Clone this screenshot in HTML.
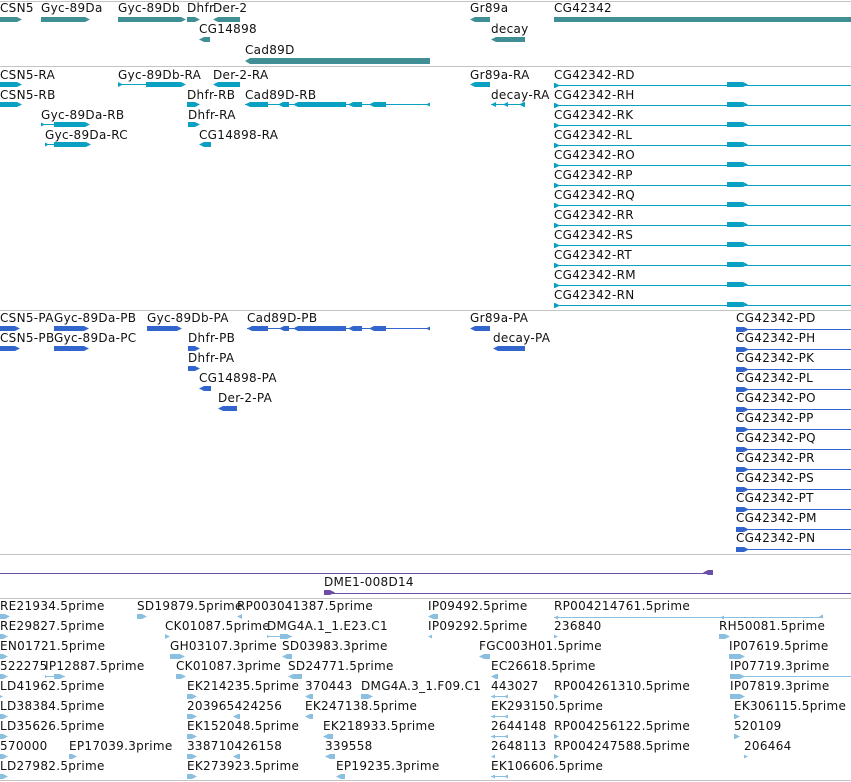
<!DOCTYPE html>
<html><head><meta charset="utf-8"><style>
body{margin:0;width:851px;height:782px;background:#fff;position:relative;overflow:hidden;font-family:"DejaVu Sans","Liberation Sans",sans-serif;font-size:12px;color:#111}
.t{position:absolute;white-space:nowrap;line-height:14px;letter-spacing:0.3px}
i{position:absolute;display:block;height:5px}
.g{background:#408f94}.r{background:#0aa0c2}.p{background:#3366cc}.e{background:#8bbfe0}.v{background:#6b4fa6}
.ar{clip-path:polygon(0 0,calc(100% - 5px) 0,100% 50%,calc(100% - 5px) 100%,0 100%)}
.al{clip-path:polygon(5px 0,100% 0,100% 100%,5px 100%,0 50%)}
b{position:absolute;display:block;height:1px}
.h{position:absolute;left:0;width:851px;height:1px;background:#c4c4c4}
</style></head><body>
<div class="h" style="top:1px"></div>
<div class="h" style="top:66px"></div>
<div class="h" style="top:310px"></div>
<div class="h" style="top:554px"></div>
<div class="h" style="top:598px"></div>
<div class="h" style="top:780px"></div>

<!-- gene track -->
<div class="t" style="left:0;top:1px">CSN5</div>
<div class="t" style="left:41px;top:1px">Gyc-89Da</div>
<div class="t" style="left:118px;top:1px">Gyc-89Db</div>
<div class="t" style="left:187px;top:1px">Dhfr</div>
<div class="t" style="left:213px;top:1px">Der-2</div>
<div class="t" style="left:470px;top:1px">Gr89a</div>
<div class="t" style="left:554px;top:1px">CG42342</div>
<i class="g ar" style="left:0;top:17px;width:22px"></i>
<i class="g ar" style="left:41px;top:17px;width:49px"></i>
<i class="g ar" style="left:118px;top:17px;width:68px"></i>
<i class="g ar" style="left:187px;top:17px;width:13px"></i>
<i class="g al" style="left:213px;top:17px;width:27px"></i>
<i class="g al" style="left:470px;top:17px;width:20px"></i>
<i class="g" style="left:554px;top:17px;width:297px"></i>
<div class="t" style="left:199px;top:22px">CG14898</div>
<div class="t" style="left:491px;top:22px">decay</div>
<i class="g al" style="left:199px;top:37px;width:11px"></i>
<i class="g al" style="left:491px;top:37px;width:34px"></i>
<div class="t" style="left:245px;top:43px">Cad89D</div>
<i class="g al" style="left:245px;top:58px;width:185px;height:6px"></i>

<!-- transcripts -->
<div class="t" style="left:0;top:68px">CSN5-RA</div>
<div class="t" style="left:118px;top:68px">Gyc-89Db-RA</div>
<div class="t" style="left:213px;top:68px">Der-2-RA</div>
<div class="t" style="left:470px;top:68px">Gr89a-RA</div>
<i class="r ar" style="left:0;top:82px;width:22px"></i>
<b class="r" style="left:118px;top:84px;width:28px"></b><i class="r ar" style="left:118px;top:82px;width:5px"></i><i class="r ar" style="left:146px;top:82px;width:40px"></i>
<i class="r al" style="left:213px;top:82px;width:27px"></i>
<i class="r al" style="left:470px;top:82px;width:20px"></i>
<div class="t" style="left:0;top:88px">CSN5-RB</div>
<div class="t" style="left:187px;top:88px">Dhfr-RB</div>
<div class="t" style="left:245px;top:88px">Cad89D-RB</div>
<div class="t" style="left:491px;top:88px">decay-RA</div>
<i class="r ar" style="left:0;top:102px;width:22px"></i>
<i class="r ar" style="left:187px;top:102px;width:13px"></i>
<b class="r" style="left:245px;top:104px;width:185px"></b>
<i class="r al" style="left:245px;top:102px;width:23px"></i><i class="r al" style="left:278px;top:102px;width:11px"></i><i class="r al" style="left:293px;top:102px;width:53px"></i><i class="r al" style="left:348px;top:102px;width:14px"></i><i class="r al" style="left:369px;top:102px;width:17px"></i><i class="r al" style="left:426px;top:102px;width:4px"></i>
<b class="r" style="left:491px;top:104px;width:34px"></b><i class="r al" style="left:491px;top:102px;width:5px"></i><i class="r al" style="left:503px;top:102px;width:5px"></i><i class="r al" style="left:519px;top:102px;width:6px"></i>
<div class="t" style="left:41px;top:108px">Gyc-89Da-RB</div>
<div class="t" style="left:188px;top:108px">Dhfr-RA</div>
<b class="r" style="left:41px;top:124px;width:14px"></b><i class="r ar" style="left:41px;top:122px;width:4px"></i><i class="r ar" style="left:54px;top:122px;width:36px"></i>
<i class="r ar" style="left:188px;top:122px;width:12px"></i>
<div class="t" style="left:45px;top:128px">Gyc-89Da-RC</div>
<div class="t" style="left:199px;top:128px">CG14898-RA</div>
<b class="r" style="left:45px;top:144px;width:10px"></b><i class="r ar" style="left:45px;top:142px;width:4px"></i><i class="r ar" style="left:54px;top:142px;width:37px"></i>
<i class="r al" style="left:199px;top:142px;width:12px"></i>

<div class="t" style="left:554px;top:68px">CG42342-RD</div>
<div class="t" style="left:554px;top:88px">CG42342-RH</div>
<div class="t" style="left:554px;top:108px">CG42342-RK</div>
<div class="t" style="left:554px;top:128px">CG42342-RL</div>
<div class="t" style="left:554px;top:148px">CG42342-RO</div>
<div class="t" style="left:554px;top:168px">CG42342-RP</div>
<div class="t" style="left:554px;top:188px">CG42342-RQ</div>
<div class="t" style="left:554px;top:208px">CG42342-RR</div>
<div class="t" style="left:554px;top:228px">CG42342-RS</div>
<div class="t" style="left:554px;top:248px">CG42342-RT</div>
<div class="t" style="left:554px;top:268px">CG42342-RM</div>
<div class="t" style="left:554px;top:288px">CG42342-RN</div>
<b class="r" style="left:554px;top:85px;width:297px"></b><i class="r ar" style="left:554px;top:83px;width:6px"></i><i class="r ar" style="left:727px;top:82px;width:21px"></i>
<b class="r" style="left:554px;top:105px;width:297px"></b><i class="r ar" style="left:554px;top:103px;width:6px"></i><i class="r ar" style="left:727px;top:102px;width:21px"></i>
<b class="r" style="left:554px;top:125px;width:297px"></b><i class="r ar" style="left:554px;top:123px;width:6px"></i><i class="r ar" style="left:727px;top:122px;width:21px"></i>
<b class="r" style="left:554px;top:145px;width:297px"></b><i class="r ar" style="left:554px;top:143px;width:6px"></i><i class="r ar" style="left:727px;top:142px;width:21px"></i>
<b class="r" style="left:554px;top:165px;width:297px"></b><i class="r ar" style="left:554px;top:163px;width:6px"></i><i class="r ar" style="left:727px;top:162px;width:21px"></i>
<b class="r" style="left:554px;top:185px;width:297px"></b><i class="r ar" style="left:554px;top:183px;width:6px"></i><i class="r ar" style="left:727px;top:182px;width:21px"></i>
<b class="r" style="left:554px;top:205px;width:297px"></b><i class="r ar" style="left:554px;top:203px;width:6px"></i><i class="r ar" style="left:727px;top:202px;width:21px"></i>
<b class="r" style="left:554px;top:225px;width:297px"></b><i class="r ar" style="left:554px;top:223px;width:6px"></i><i class="r ar" style="left:727px;top:222px;width:21px"></i>
<b class="r" style="left:554px;top:245px;width:297px"></b><i class="r ar" style="left:554px;top:243px;width:6px"></i><i class="r ar" style="left:727px;top:242px;width:21px"></i>
<b class="r" style="left:554px;top:265px;width:297px"></b><i class="r ar" style="left:554px;top:263px;width:6px"></i><i class="r ar" style="left:727px;top:262px;width:21px"></i>
<b class="r" style="left:554px;top:285px;width:297px"></b><i class="r ar" style="left:554px;top:283px;width:6px"></i><i class="r ar" style="left:727px;top:282px;width:21px"></i>
<b class="r" style="left:554px;top:305px;width:297px"></b><i class="r ar" style="left:554px;top:303px;width:6px"></i><i class="r ar" style="left:727px;top:302px;width:21px"></i>

<!-- proteins -->
<div class="t" style="left:0;top:311px">CSN5-PA</div>
<div class="t" style="left:54px;top:311px">Gyc-89Da-PB</div>
<div class="t" style="left:147px;top:311px">Gyc-89Db-PA</div>
<div class="t" style="left:247px;top:311px">Cad89D-PB</div>
<div class="t" style="left:470px;top:311px">Gr89a-PA</div>
<i class="p ar" style="left:0;top:326px;width:20px"></i>
<i class="p ar" style="left:54px;top:326px;width:35px"></i>
<i class="p ar" style="left:147px;top:326px;width:35px"></i>
<b class="p" style="left:247px;top:328px;width:183px"></b>
<i class="p al" style="left:247px;top:326px;width:21px"></i><i class="p al" style="left:279px;top:326px;width:10px"></i><i class="p al" style="left:293px;top:326px;width:53px"></i><i class="p al" style="left:348px;top:326px;width:14px"></i><i class="p al" style="left:369px;top:326px;width:17px"></i><i class="p al" style="left:426px;top:326px;width:4px"></i>
<i class="p al" style="left:470px;top:326px;width:20px"></i>
<div class="t" style="left:0;top:331px">CSN5-PB</div>
<div class="t" style="left:54px;top:331px">Gyc-89Da-PC</div>
<div class="t" style="left:188px;top:331px">Dhfr-PB</div>
<div class="t" style="left:493px;top:331px">decay-PA</div>
<i class="p ar" style="left:0;top:346px;width:20px"></i>
<i class="p ar" style="left:54px;top:346px;width:35px"></i>
<i class="p ar" style="left:188px;top:346px;width:12px"></i>
<i class="p al" style="left:493px;top:346px;width:32px"></i>
<div class="t" style="left:188px;top:351px">Dhfr-PA</div>
<i class="p ar" style="left:188px;top:366px;width:12px"></i>
<div class="t" style="left:199px;top:371px">CG14898-PA</div>
<i class="p al" style="left:199px;top:386px;width:12px"></i>
<div class="t" style="left:218px;top:391px">Der-2-PA</div>
<i class="p al" style="left:218px;top:406px;width:19px"></i>

<div class="t" style="left:736px;top:311px">CG42342-PD</div>
<div class="t" style="left:736px;top:331px">CG42342-PH</div>
<div class="t" style="left:736px;top:351px">CG42342-PK</div>
<div class="t" style="left:736px;top:371px">CG42342-PL</div>
<div class="t" style="left:736px;top:391px">CG42342-PO</div>
<div class="t" style="left:736px;top:411px">CG42342-PP</div>
<div class="t" style="left:736px;top:431px">CG42342-PQ</div>
<div class="t" style="left:736px;top:451px">CG42342-PR</div>
<div class="t" style="left:736px;top:471px">CG42342-PS</div>
<div class="t" style="left:736px;top:491px">CG42342-PT</div>
<div class="t" style="left:736px;top:511px">CG42342-PM</div>
<div class="t" style="left:736px;top:531px">CG42342-PN</div>
<b class="p" style="left:736px;top:329px;width:115px"></b><i class="p ar" style="left:736px;top:327px;width:13px"></i>
<b class="p" style="left:736px;top:349px;width:115px"></b><i class="p ar" style="left:736px;top:347px;width:13px"></i>
<b class="p" style="left:736px;top:369px;width:115px"></b><i class="p ar" style="left:736px;top:367px;width:13px"></i>
<b class="p" style="left:736px;top:389px;width:115px"></b><i class="p ar" style="left:736px;top:387px;width:13px"></i>
<b class="p" style="left:736px;top:409px;width:115px"></b><i class="p ar" style="left:736px;top:407px;width:13px"></i>
<b class="p" style="left:736px;top:429px;width:115px"></b><i class="p ar" style="left:736px;top:427px;width:13px"></i>
<b class="p" style="left:736px;top:449px;width:115px"></b><i class="p ar" style="left:736px;top:447px;width:13px"></i>
<b class="p" style="left:736px;top:469px;width:115px"></b><i class="p ar" style="left:736px;top:467px;width:13px"></i>
<b class="p" style="left:736px;top:489px;width:115px"></b><i class="p ar" style="left:736px;top:487px;width:13px"></i>
<b class="p" style="left:736px;top:509px;width:115px"></b><i class="p ar" style="left:736px;top:507px;width:13px"></i>
<b class="p" style="left:736px;top:529px;width:115px"></b><i class="p ar" style="left:736px;top:527px;width:13px"></i>
<b class="p" style="left:736px;top:549px;width:115px"></b><i class="p ar" style="left:736px;top:547px;width:13px"></i>

<!-- purple track -->
<b class="v" style="left:0;top:573px;width:710px"></b><i class="v al" style="left:703px;top:570px;width:10px"></i>
<div class="t" style="left:324px;top:575px">DME1-008D14</div>
<b class="v" style="left:324px;top:593px;width:527px"></b><i class="v ar" style="left:324px;top:590px;width:11px"></i>

<!-- ESTs -->
<div class="t" style="left:0;top:599px">RE21934.5prime</div>
<div class="t" style="left:137px;top:599px">SD19879.5prime</div>
<div class="t" style="left:237px;top:599px">RP003041387.5prime</div>
<div class="t" style="left:428px;top:599px">IP09492.5prime</div>
<div class="t" style="left:554px;top:599px">RP004214761.5prime</div>
<i class="e ar" style="left:0;top:614px;width:10px"></i><i class="e ar" style="left:137px;top:614px;width:10px"></i><i class="e al" style="left:237px;top:614px;width:5px"></i><i class="e al" style="left:428px;top:614px;width:10px"></i>
<b class="e" style="left:554px;top:617px;width:269px"></b><i class="e al" style="left:554px;top:615px;width:4px"></i><i class="e al" style="left:720px;top:615px;width:4px"></i><i class="e al" style="left:819px;top:614px;width:4px"></i>

<div class="t" style="left:0;top:619px">RE29827.5prime</div>
<div class="t" style="left:165px;top:619px">CK01087.5prime</div>
<div class="t" style="left:267px;top:619px">DMG4A.1_1.E23.C1</div>
<div class="t" style="left:428px;top:619px">IP09292.5prime</div>
<div class="t" style="left:554px;top:619px">236840</div>
<div class="t" style="left:719px;top:619px">RH50081.5prime</div>
<i class="e ar" style="left:0;top:634px;width:8px"></i><i class="e ar" style="left:165px;top:634px;width:5px"></i><b class="e" style="left:267px;top:636px;width:25px"></b><i class="e ar" style="left:267px;top:634px;width:3px"></i><i class="e ar" style="left:280px;top:634px;width:12px"></i><i class="e al" style="left:428px;top:634px;width:4px"></i><i class="e ar" style="left:554px;top:634px;width:4px"></i><i class="e ar" style="left:719px;top:634px;width:11px"></i>

<div class="t" style="left:0;top:639px">EN01721.5prime</div>
<div class="t" style="left:170px;top:639px">GH03107.3prime</div>
<div class="t" style="left:282px;top:639px">SD03983.3prime</div>
<div class="t" style="left:479px;top:639px">FGC003H01.5prime</div>
<div class="t" style="left:729px;top:639px">IP07619.5prime</div>
<i class="e ar" style="left:0;top:654px;width:8px"></i><i class="e ar" style="left:170px;top:654px;width:15px"></i><i class="e al" style="left:282px;top:654px;width:10px"></i><i class="e al" style="left:479px;top:654px;width:11px"></i><i class="e ar" style="left:729px;top:654px;width:16px"></i>

<div class="t" style="left:0;top:659px">522275</div>
<div class="t" style="left:45px;top:659px">IP12887.5prime</div>
<div class="t" style="left:176px;top:659px">CK01087.3prime</div>
<div class="t" style="left:288px;top:659px">SD24771.5prime</div>
<div class="t" style="left:491px;top:659px">EC26618.5prime</div>
<div class="t" style="left:730px;top:659px">IP07719.3prime</div>
<i class="e ar" style="left:0;top:674px;width:8px"></i><b class="e" style="left:45px;top:676px;width:20px"></b><i class="e ar" style="left:45px;top:674px;width:3px"></i><i class="e ar" style="left:54px;top:674px;width:11px"></i><i class="e ar" style="left:176px;top:674px;width:10px"></i><i class="e al" style="left:288px;top:674px;width:14px"></i><i class="e al" style="left:491px;top:674px;width:7px"></i><b class="e" style="left:730px;top:676px;width:121px"></b><i class="e ar" style="left:730px;top:674px;width:15px"></i>

<div class="t" style="left:0;top:679px">LD41962.5prime</div>
<div class="t" style="left:187px;top:679px">EK214235.5prime</div>
<div class="t" style="left:305px;top:679px">370443</div>
<div class="t" style="left:361px;top:679px">DMG4A.3_1.F09.C1</div>
<div class="t" style="left:491px;top:679px">443027</div>
<div class="t" style="left:554px;top:679px">RP004261310.5prime</div>
<div class="t" style="left:730px;top:679px">IP07819.3prime</div>
<i class="e ar" style="left:0;top:694px;width:3px"></i><i class="e ar" style="left:187px;top:694px;width:10px"></i><i class="e al" style="left:305px;top:694px;width:8px"></i><i class="e ar" style="left:361px;top:694px;width:12px"></i><b class="e" style="left:491px;top:696px;width:17px"></b><i class="e al" style="left:491px;top:694px;width:4px"></i><i class="e al" style="left:504px;top:694px;width:4px"></i><i class="e ar" style="left:554px;top:694px;width:5px"></i><i class="e ar" style="left:730px;top:694px;width:15px"></i>

<div class="t" style="left:0;top:699px">LD38384.5prime</div>
<div class="t" style="left:187px;top:699px">203965424256</div>
<div class="t" style="left:305px;top:699px">EK247138.5prime</div>
<div class="t" style="left:491px;top:699px">EK293150.5prime</div>
<div class="t" style="left:734px;top:699px">EK306115.5prime</div>
<i class="e ar" style="left:0;top:714px;width:8px"></i><i class="e ar" style="left:187px;top:714px;width:10px"></i><i class="e al" style="left:233px;top:714px;width:7px"></i><i class="e al" style="left:305px;top:714px;width:8px"></i><b class="e" style="left:491px;top:716px;width:17px"></b><i class="e al" style="left:491px;top:714px;width:4px"></i><i class="e al" style="left:504px;top:714px;width:4px"></i><i class="e ar" style="left:734px;top:714px;width:6px"></i>

<div class="t" style="left:0;top:719px">LD35626.5prime</div>
<div class="t" style="left:187px;top:719px">EK152048.5prime</div>
<div class="t" style="left:323px;top:719px">EK218933.5prime</div>
<div class="t" style="left:491px;top:719px">2644148</div>
<div class="t" style="left:554px;top:719px">RP004256122.5prime</div>
<div class="t" style="left:734px;top:719px">520109</div>
<i class="e ar" style="left:0;top:734px;width:8px"></i><i class="e ar" style="left:187px;top:734px;width:10px"></i><i class="e al" style="left:323px;top:734px;width:10px"></i><b class="e" style="left:491px;top:736px;width:17px"></b><i class="e al" style="left:491px;top:734px;width:4px"></i><i class="e al" style="left:504px;top:734px;width:4px"></i><i class="e ar" style="left:554px;top:734px;width:5px"></i><i class="e ar" style="left:734px;top:734px;width:6px"></i>

<div class="t" style="left:0;top:739px">570000</div>
<div class="t" style="left:69px;top:739px">EP17039.3prime</div>
<div class="t" style="left:187px;top:739px">338710426158</div>
<div class="t" style="left:325px;top:739px">339558</div>
<div class="t" style="left:491px;top:739px">2648113</div>
<div class="t" style="left:554px;top:739px">RP004247588.5prime</div>
<div class="t" style="left:744px;top:739px">206464</div>
<i class="e ar" style="left:0;top:754px;width:8px"></i><i class="e ar" style="left:69px;top:754px;width:8px"></i><i class="e ar" style="left:187px;top:754px;width:10px"></i><i class="e al" style="left:233px;top:754px;width:7px"></i><i class="e al" style="left:325px;top:754px;width:10px"></i><i class="e al" style="left:491px;top:754px;width:4px"></i><i class="e ar" style="left:554px;top:754px;width:5px"></i><i class="e ar" style="left:744px;top:754px;width:4px"></i>

<div class="t" style="left:0;top:759px">LD27982.5prime</div>
<div class="t" style="left:187px;top:759px">EK273923.5prime</div>
<div class="t" style="left:336px;top:759px">EP19235.3prime</div>
<div class="t" style="left:491px;top:759px">EK106606.5prime</div>
<i class="e ar" style="left:0;top:774px;width:8px"></i><i class="e ar" style="left:187px;top:774px;width:10px"></i><i class="e al" style="left:336px;top:774px;width:9px"></i><b class="e" style="left:491px;top:776px;width:17px"></b><i class="e al" style="left:491px;top:774px;width:4px"></i><i class="e al" style="left:504px;top:774px;width:4px"></i>
</body></html>
